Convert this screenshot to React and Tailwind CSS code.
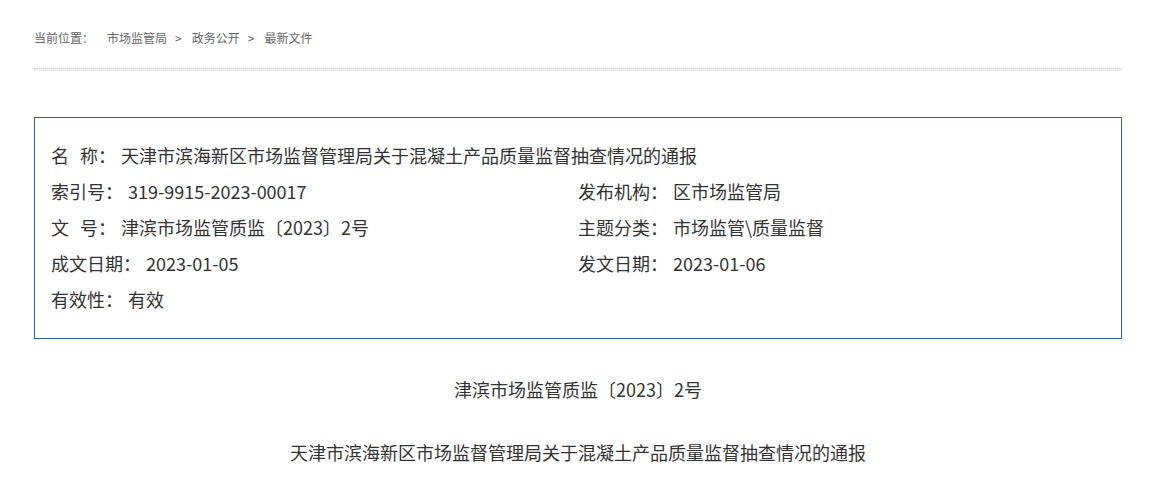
import React from 'react';

const font = { fontFamily: '"Microsoft YaHei", "Noto Sans CJK SC", "Noto Sans", sans-serif' };

const Field = ({ label, value }) => (
  <div className="flex items-center h-9 whitespace-nowrap">
    <span>{label}</span>
    <span className="ml-[5px]">{value}</span>
  </div>
);

export default function App() {
  return (
    <div className="bg-white w-[1160px] h-[481px] overflow-hidden text-[#333]" style={font}>
      <div className="ml-[34px] w-[1088px]">
        {/* breadcrumb */}
        <div className="pt-[29px] h-[18px] box-content flex items-center text-[12px] leading-[18px] text-[#666]">
          <span>当前位置：</span>
          <span className="ml-[13px]">市场监管局</span>
          <span className="ml-[8px] mr-[10px]">&gt;</span>
          <span>政务公开</span>
          <span className="ml-[8px] mr-[10px]">&gt;</span>
          <span>最新文件</span>
        </div>

        <div className="mt-[21px] h-[3px] border-t border-dotted border-[#c8c8c8] bg-[#efefef]" />

        {/* info box */}
        <div className="mt-[46px] w-[1088px] h-[222px] border border-[#3060b8] px-4 pt-[19px] text-[18px] leading-9">
          <Field label={<span>名<span className="ml-[11px]">称：</span></span>} value="天津市滨海新区市场监督管理局关于混凝土产品质量监督抽查情况的通报" />
          <div className="grid grid-cols-2">
            <Field label="索引号：" value="319-9915-2023-00017" />
            <Field label="发布机构：" value="区市场监管局" />
            <Field label={<span>文<span className="ml-[11px]">号：</span></span>} value="津滨市场监管质监〔2023〕2号" />
            <Field label="主题分类：" value="市场监管\质量监督" />
            <Field label="成文日期：" value="2023-01-05" />
            <Field label="发文日期：" value="2023-01-06" />
          </div>
          <Field label="有效性：" value="有效" />
        </div>

        {/* document title */}
        <div className="mt-[38px] text-center text-[18px] leading-6">
          津滨市场监管质监〔2023〕2号
        </div>
        <div className="mt-[39px] text-center text-[18px] leading-6">
          天津市滨海新区市场监督管理局关于混凝土产品质量监督抽查情况的通报
        </div>
      </div>
    </div>
  );
}
